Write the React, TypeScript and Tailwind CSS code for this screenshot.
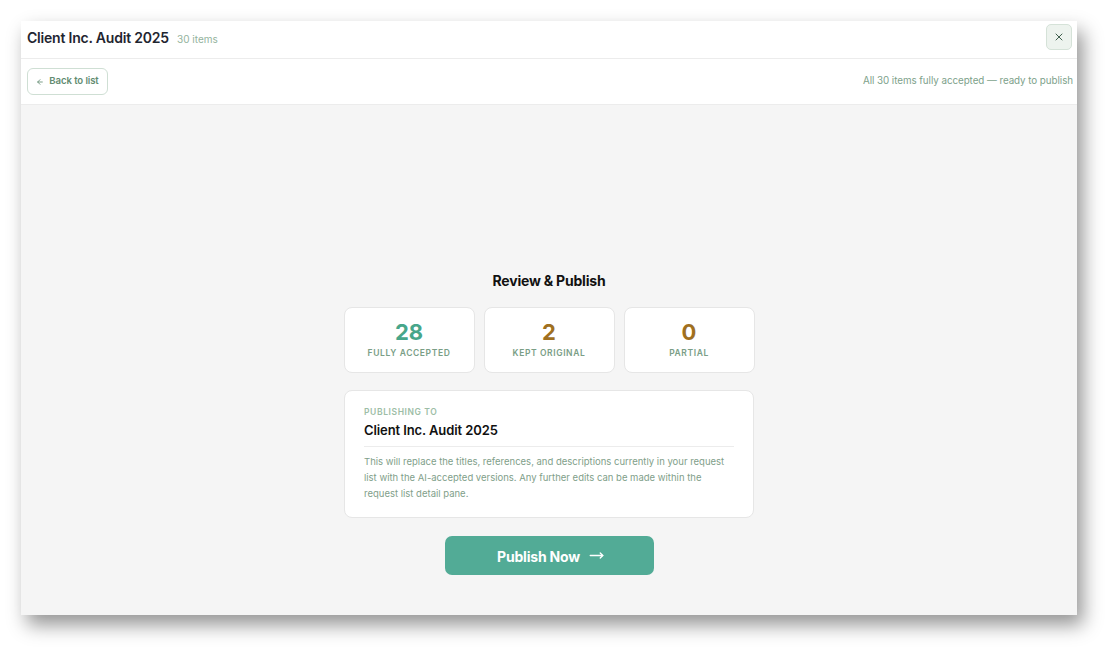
import React from 'react';
import { ArrowLeft, MoveRight, X } from 'lucide-react';

const stats = [
  { value: '28', label: 'Fully Accepted', color: 'text-[#47a68a]' },
  { value: '2', label: 'Kept Original', color: 'text-[#a0701f]' },
  { value: '0', label: 'Partial', color: 'text-[#a0701f]' },
];

export default function App() {
  return (
    <div className="w-[1119px] h-[657px] bg-white pt-[21px] pl-[21px] font-['Inter',sans-serif]">
      <div className="w-[1056px] h-[594px] flex flex-col bg-white shadow-[6px_10px_18px_rgba(0,0,0,0.42)]">
        {/* title bar */}
        <div className="h-[38px] flex items-start justify-between pl-[6px] pr-[6px] border-b border-[#ececec]">
          <div className="flex items-baseline gap-[8px] pt-[6px]">
            <h1 className="text-[14px] font-semibold text-[#1f2530] tracking-[-0.2px]">Client Inc. Audit 2025</h1>
            <span className="text-[10px] text-[#93b39d]">30 items</span>
          </div>
          <button className="w-[26px] h-[26px] mt-[3px] mr-[-1px] flex items-center justify-center rounded-[5px] bg-[#edf3ee] border border-[#d5e2d8] text-[#3f5f4d]">
            <X className="w-[12px] h-[12px]" strokeWidth={2} />
          </button>
        </div>

        {/* toolbar */}
        <div className="h-[46px] flex items-center justify-between px-[6px] border-b border-[#ececec]">
          <button className="h-[27px] w-[81px] flex items-center justify-center gap-[5px] rounded-[6px] border border-[#cfdfd4] text-[9.6px] font-semibold text-[#638c72] tracking-[-0.1px]">
            <ArrowLeft className="w-[8px] h-[8px]" strokeWidth={2.5} />
            Back to list
          </button>
          <span className="text-[9.8px] text-[#7da18a] tracking-[-0.05px] mr-[-2px]">All 30 items fully accepted — ready to publish</span>
        </div>

        {/* body */}
        <div className="flex-1 bg-[#f5f5f5] flex flex-col items-center pt-[166px]">
          <h2 className="text-[14px] font-bold text-[#111] leading-[20px] tracking-[-0.2px]">Review &amp; Publish</h2>

          <div className="mt-[16px] flex gap-[9px]">
            {stats.map((s) => (
              <div
                key={s.label}
                className="w-[131px] h-[66px] bg-white rounded-[8px] border border-[#e6e6e6] flex flex-col items-center justify-center"
              >
                <span className={`text-[22px] font-bold leading-[24px] ${s.color}`}>{s.value}</span>
                <span className="mt-[3px] text-[8.5px] font-semibold uppercase tracking-[0.6px] text-[#7a9e86]">{s.label}</span>
              </div>
            ))}
          </div>

          <div className="mt-[17px] w-[410px] bg-white rounded-[8px] border border-[#e6e6e6] px-[19px] pt-[15px] pb-[15px]">
            <div className="text-[8.5px] font-semibold uppercase tracking-[0.6px] text-[#9dbda6] leading-[12px]">Publishing to</div>
            <div className="mt-[3px] text-[13px] font-semibold text-[#111] leading-[18px] tracking-[-0.1px]">Client Inc. Audit 2025</div>
            <div className="mt-[7px] border-t border-[#ececec]" />
            <p className="mt-[7px] text-[9.5px] leading-[16px] text-[#7fa08a]">
              This will replace the titles, references, and descriptions currently in your request list with the AI-accepted versions. Any further edits can be made within the request list detail pane.
            </p>
          </div>

          <button className="mt-[18px] w-[209px] h-[39px] rounded-[7px] bg-[#52ab96] flex items-center justify-center gap-[9px] text-white text-[14px] font-bold tracking-[-0.2px]">
            <span className="mt-[1px] ml-[3px]">Publish Now</span>
            <MoveRight className="w-[15px] h-[15px]" strokeWidth={2.2} />
          </button>
        </div>
      </div>
    </div>
  );
}
